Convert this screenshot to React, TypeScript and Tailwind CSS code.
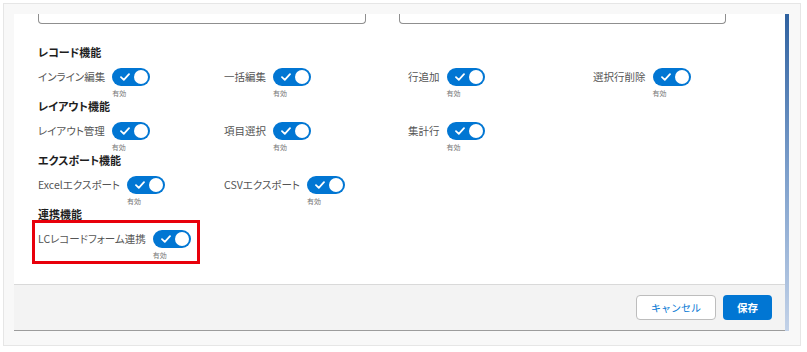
import React from "react";

type Item = { label: string; col: number };

const sections: { title: string; items: Item[] }[] = [
  {
    title: "レコード機能",
    items: [
      { label: "インライン編集", col: 0 },
      { label: "一括編集", col: 1 },
      { label: "行追加", col: 2 },
      { label: "選択行削除", col: 3 },
    ],
  },
  {
    title: "レイアウト機能",
    items: [
      { label: "レイアウト管理", col: 0 },
      { label: "項目選択", col: 1 },
      { label: "集計行", col: 2 },
    ],
  },
  {
    title: "エクスポート機能",
    items: [
      { label: "Excelエクスポート", col: 0 },
      { label: "CSVエクスポート", col: 1 },
    ],
  },
  {
    title: "連携機能",
    items: [{ label: "LCレコードフォーム連携", col: 0 }],
  },
];

function Toggle() {
  return (
    <div className="relative h-[18px] w-[38px] rounded-full bg-[#0176d3]">
      <svg
        className="absolute left-[8px] top-[5px]"
        width="10"
        height="8"
        viewBox="0 0 10 8"
        fill="none"
      >
        <path
          d="M1 4.2 L3.8 6.8 L9 1.2"
          stroke="white"
          strokeWidth="1.8"
          strokeLinecap="round"
          strokeLinejoin="round"
        />
      </svg>
      <div className="absolute right-[2px] top-[2px] h-[14px] w-[14px] rounded-full bg-white" />
    </div>
  );
}

function ToggleField({ label }: { label: string }) {
  return (
    <div className="flex items-start gap-[7px]">
      <span className="text-[10.5px] leading-[18px] text-[#555] [font-feature-settings:'palt']">
        {label}
      </span>
      <div className="flex flex-col">
        <Toggle />
        <span className="mt-[2px] text-[7px] leading-[10px] text-[#777]">有効</span>
      </div>
    </div>
  );
}

export default function App() {
  return (
    <div
      className="h-[352px] w-[807px] bg-white p-[3px]"
      style={{ fontFamily: '"Noto Sans CJK JP", "Noto Sans", sans-serif' }}
    >
      <div className="h-[343px] w-[798px] border border-[#e6e6e6] bg-[#f8f8f8] pl-[10px] pt-[10px]">
        <div className="flex h-[317px] w-[775px]">
          <div className="flex flex-1 flex-col">
            <div className="relative h-[270px] bg-white pl-[24px]">
              <div className="flex gap-[33px]">
                <div className="h-[10px] w-[328px] rounded-b-[4px] border-x border-b border-[#8f8f8f]" />
                <div className="h-[10px] w-[327px] rounded-b-[4px] border-x border-b border-[#8f8f8f]" />
              </div>
              <div className="mt-[18px]">
                {sections.map((s) => (
                  <div key={s.title} className="h-[54px]">
                    <div className="h-[20px] text-[11px] font-semibold leading-[20px] text-[#1e1e1e] [font-feature-settings:'palt']">
                      {s.title}
                    </div>
                    <div className="grid grid-cols-[186px_184px_185px_185px] pt-[6px]">
                      {[0, 1, 2, 3].map((c) => {
                        const it = s.items.find((i) => i.col === c);
                        return <div key={c}>{it && <ToggleField label={it.label} />}</div>;
                      })}
                    </div>
                  </div>
                ))}
              </div>
              <div className="absolute left-[18px] top-[206px] h-[44px] w-[168px] border-[3px] border-[#e8000b]" />
            </div>
            <div className="flex h-[47px] items-center justify-end gap-[7px] border-y border-t-[#d9d9d9] border-b-[#9c9c9c] bg-[#f3f3f3] pr-[13px]">
              <button className="h-[25px] w-[80px] rounded-[4px] border border-[#bdbdbd] bg-white text-[10px] text-[#0176d3]">
                キャンセル
              </button>
              <button className="h-[25px] w-[49px] rounded-[4px] bg-[#0176d3] text-[10.5px] font-bold text-white">
                保存
              </button>
            </div>
          </div>
          <div className="h-full w-[4px] bg-gradient-to-b from-[#2f62a0] via-[#7d9fcb] to-[#c3d2e8]" />
        </div>
      </div>
    </div>
  );
}
